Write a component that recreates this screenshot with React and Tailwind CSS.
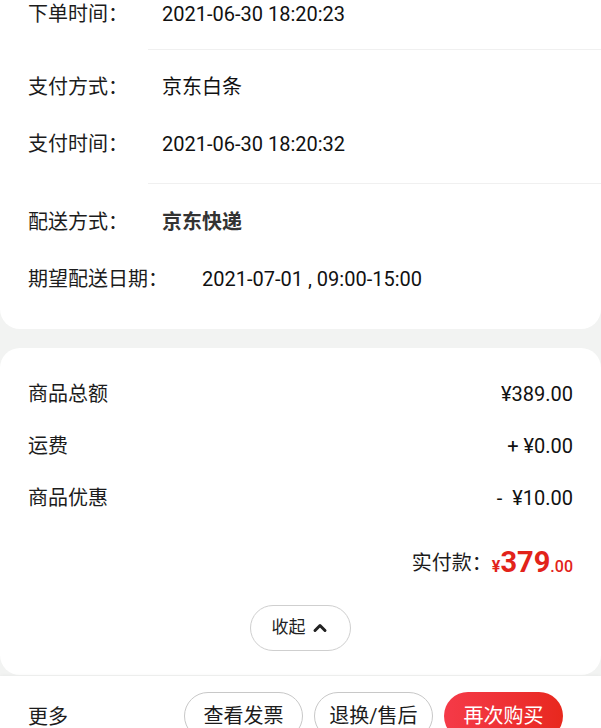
import { ChevronUp } from "lucide-react";

const font = { fontFamily: '"Roboto", "Noto Sans CJK SC", sans-serif' };

function InfoRow({ label, value, wide, bold }) {
  return (
    <div className="flex h-[57px] items-center pl-[28px] text-[20px] text-[#1c1c1c]">
      <span className={wide ? "w-[174px] shrink-0" : "w-[134px] shrink-0"}>{label}</span>
      <span className={bold ? "font-bold text-[#333]" : "text-[#111]"}>{value}</span>
    </div>
  );
}

function PriceRow({ label, value }) {
  return (
    <div className="flex h-[52px] items-center justify-between text-[20px] text-[#1c1c1c]">
      <span>{label}</span>
      <span className="whitespace-pre text-[#111]">{value}</span>
    </div>
  );
}

export default function App() {
  return (
    <div className="flex h-[728px] flex-col overflow-hidden bg-[#f2f3f2]" style={font}>
      {/* order info card */}
      <div className="rounded-b-[20px] bg-white">
        <div className="flex h-[28px] items-center pl-[28px] text-[20px] text-[#1c1c1c]">
          <span className="w-[134px] shrink-0">下单时间：</span>
          <span className="text-[#111]">2021-06-30 18:20:23</span>
        </div>
        <div className="mt-[21px] ml-[148px] h-px bg-[#f0f0f0]" />
        <div className="pt-[8px] pb-[11px]">
          <InfoRow label="支付方式：" value="京东白条" />
          <InfoRow label="支付时间：" value="2021-06-30 18:20:32" />
        </div>
        <div className="ml-[148px] h-px bg-[#f0f0f0]" />
        <div className="pt-[9px] pb-[22px]">
          <InfoRow label="配送方式：" value="京东快递" bold />
          <InfoRow label="期望配送日期：" value="2021-07-01 , 09:00-15:00" wide />
        </div>
      </div>

      {/* price card */}
      <div className="mt-[19px] rounded-[20px] bg-white px-[28px] pt-[20px] pb-[24px]">
        <PriceRow label="商品总额" value="¥389.00" />
        <PriceRow label="运费" value="+ ¥0.00" />
        <PriceRow label="商品优惠" value="-  ¥10.00" />
        <div className="mt-[13px] flex h-[52px] items-center justify-end text-[20px] text-[#1c1c1c]">
          <span>实付款：</span>
          <span className="flex items-baseline font-bold text-[#e2231a]">
            <span className="text-[16px]">¥</span>
            <span className="text-[29px] leading-none">379</span>
            <span className="text-[16px] font-medium">.00</span>
          </span>
        </div>
        <div className="mt-[16px] flex justify-center">
          <button className="flex h-[46px] w-[101px] items-center justify-center gap-[4px] rounded-full border border-[#cfcfcf] text-[17px] text-[#222]">
            收起
            <ChevronUp size={20} strokeWidth={3.6} />
          </button>
        </div>
      </div>

      {/* bottom bar */}
      <div className="mt-px flex flex-1 items-start bg-white pt-[16px] pr-[38px] pl-[28px] shadow-[0_-1px_3px_rgba(0,0,0,0.03)]">
        <span className="mt-[10px] text-[20px] text-[#1c1c1c]">更多</span>
        <div className="ml-auto flex gap-[11px]">
          <button className="h-[48px] w-[119px] rounded-full border border-[#c8c8c8] text-[20px] text-[#1c1c1c]">
            查看发票
          </button>
          <button className="h-[48px] w-[119px] rounded-full border border-[#c8c8c8] text-[20px] text-[#1c1c1c]">
            退换/售后
          </button>
          <button className="h-[48px] w-[119px] rounded-full bg-linear-to-r from-[#f53a48] to-[#e8281d] text-[20px] text-white">
            再次购买
          </button>
        </div>
      </div>
    </div>
  );
}
